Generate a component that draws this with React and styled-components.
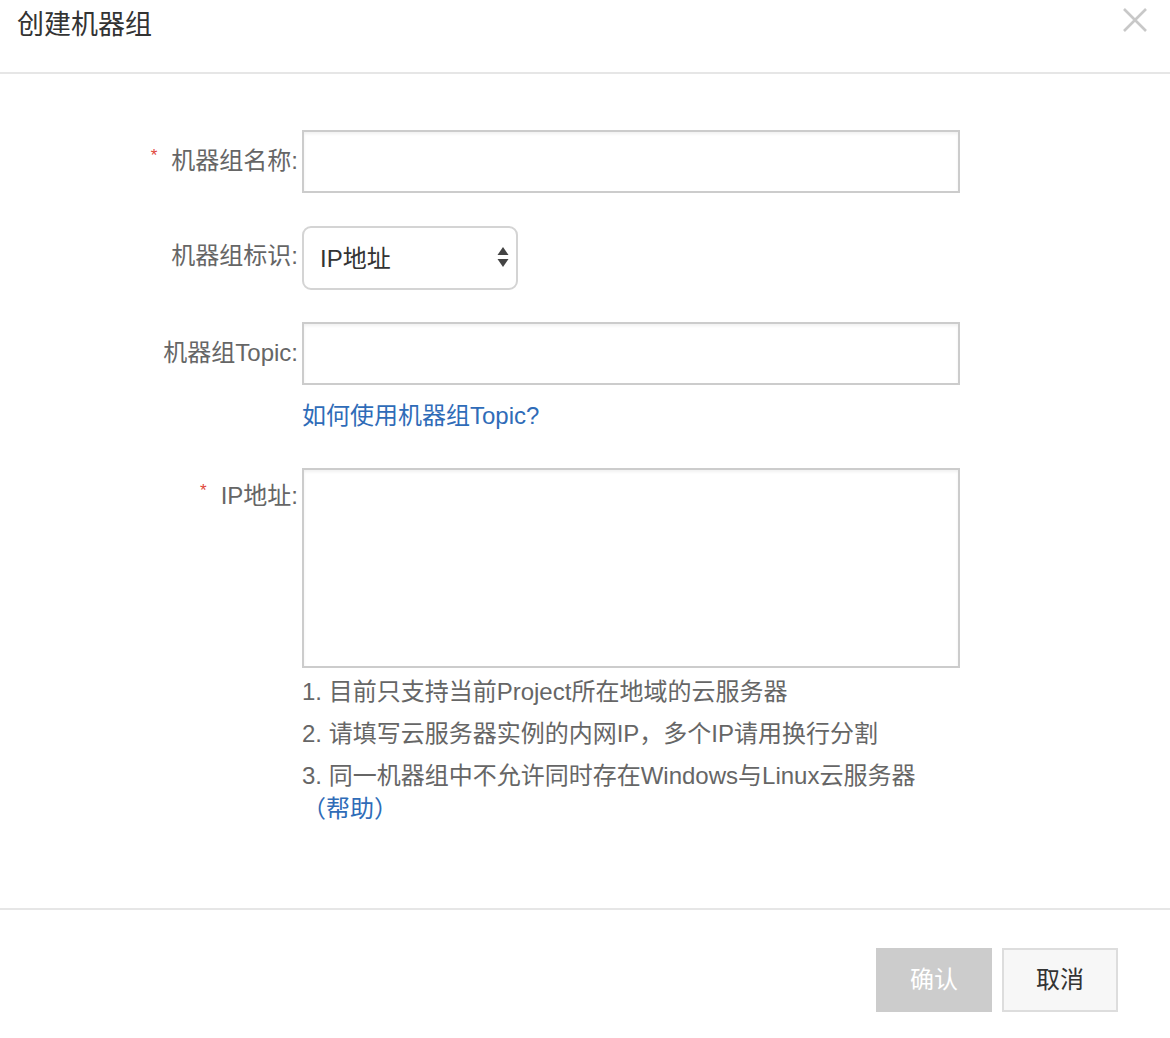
import styled, { createGlobalStyle } from "styled-components";

const GlobalStyle = createGlobalStyle`
  body {
    margin: 0;
    background: #fff;
    font-family: "Liberation Sans", "Noto Sans CJK SC", sans-serif;
  }
`;

const Dialog = styled.div`
  width: 1170px;
  height: 1038px;
  display: flex;
  flex-direction: column;
  background: #fff;
`;

const Header = styled.div`
  position: relative;
  height: 72px;
  padding: 0 17px;
  border-bottom: 2px solid #e6e6e6;
`;

const Title = styled.h2`
  margin: 0;
  padding-top: 3px;
  font-size: 27px;
  font-weight: normal;
  line-height: 44px;
  color: #333;
`;

const Close = styled.button`
  position: absolute;
  top: 7px;
  right: 22px;
  width: 26px;
  height: 26px;
  padding: 0;
  border: none;
  background: none;
  cursor: pointer;
`;

const Body = styled.div`
  padding: 56px 0 0;
  flex: 1;
`;

const Form = styled.div`
  display: grid;
  grid-template-columns: 298px 658px;
  column-gap: 4px;
  row-gap: 32px;
  align-items: start;
`;

const Label = styled.label`
  box-sizing: border-box;
  display: flex;
  justify-content: flex-end;
  align-items: center;
  height: 63px;
  margin-top: ${(p) => (p.$tall ? "2px" : "0")};
  padding-bottom: 7px;
  font-size: 24px;
  color: #666;
  white-space: nowrap;
`;

const Star = styled.span`
  color: #e0463a;
  font-size: 17px;
  margin-right: 14px;
  align-self: center;
  transform: translateY(-2px);
`;

const Field = styled.div`
  display: flex;
  flex-direction: column;
`;

const TextInput = styled.input`
  box-sizing: border-box;
  width: 658px;
  height: 63px;
  border: 2px solid #ccc;
  box-shadow: inset 0 2px 3px rgba(0, 0, 0, 0.06);
  padding: 0 16px;
  font-size: 24px;
  font-family: inherit;
  color: #333;
  outline: none;
`;

const TextArea = styled.textarea`
  box-sizing: border-box;
  width: 658px;
  height: 200px;
  margin-top: 5px;
  border: 2px solid #ccc;
  box-shadow: inset 0 2px 3px rgba(0, 0, 0, 0.06);
  padding: 12px 16px;
  font-size: 24px;
  font-family: inherit;
  color: #333;
  resize: none;
  outline: none;
`;

const SelectWrap = styled.div`
  position: relative;
  width: 216px;
  height: 64px;
  margin-top: 1px;
`;

const Select = styled.select`
  box-sizing: border-box;
  width: 100%;
  height: 100%;
  appearance: none;
  border: 2px solid #d4d4d4;
  border-radius: 9px;
  background: #fff;
  padding: 0 16px;
  font-size: 24px;
  font-family: inherit;
  color: #333;
  outline: none;
`;

const Arrows = styled.svg`
  position: absolute;
  right: 9px;
  top: 21px;
  pointer-events: none;
`;

const HelpLink = styled.a`
  margin-top: 16px;
  font-size: 24px;
  line-height: 30px;
  color: #2f6cb8;
  text-decoration: none;
`;

const Hints = styled.ol`
  margin: 7px 0 0;
  padding: 0;
  list-style: none;
  width: 620px;
`;

const Hint = styled.li`
  font-size: 24px;
  line-height: 33px;
  color: #666;
  margin-bottom: 9px;
`;

const Help = styled.a`
  color: #2f6cb8;
  text-decoration: none;
`;

const Footer = styled.div`
  display: flex;
  justify-content: flex-end;
  gap: 10px;
  padding: 38px 52px 26px;
  border-top: 2px solid #e6e6e6;
`;

const Button = styled.button`
  box-sizing: border-box;
  width: 116px;
  height: 64px;
  padding: 0 0 5px;
  font-size: 24px;
  font-family: inherit;
  border: 2px solid ${(p) => (p.$primary ? "#cccccc" : "#dddddd")};
  background: ${(p) => (p.$primary ? "#cccccc" : "#f7f7f7")};
  color: ${(p) => (p.$primary ? "#fff" : "#333")};
  cursor: ${(p) => (p.$primary ? "not-allowed" : "pointer")};
`;

export default function App() {
  return (
    <>
      <GlobalStyle />
      <Dialog>
        <Header>
          <Title>创建机器组</Title>
          <Close aria-label="关闭">
            <svg width="26" height="26" viewBox="0 0 26 26">
              <path d="M2 2L24 24M24 2L2 24" stroke="#c8c8c8" strokeWidth="2.6" />
            </svg>
          </Close>
        </Header>
        <Body>
          <Form>
            <Label>
              <Star>*</Star>机器组名称:
            </Label>
            <TextInput />

            <Label>机器组标识:</Label>
            <SelectWrap>
              <Select defaultValue="ip">
                <option value="ip">IP地址</option>
                <option value="id">用户自定义标识</option>
              </Select>
              <Arrows width="12" height="20" viewBox="0 0 12 20">
                <path d="M6 0L11.5 8H0.5Z M0.5 12H11.5L6 20Z" fill="#444" />
              </Arrows>
            </SelectWrap>

            <Label>机器组Topic:</Label>
            <Field>
              <TextInput />
              <HelpLink href="#">如何使用机器组Topic?</HelpLink>
            </Field>

            <Label $tall>
              <Star>*</Star>IP地址:
            </Label>
            <Field>
              <TextArea />
              <Hints>
                <Hint>1. 目前只支持当前Project所在地域的云服务器</Hint>
                <Hint>2. 请填写云服务器实例的内网IP，多个IP请用换行分割</Hint>
                <Hint>
                  3. 同一机器组中不允许同时存在Windows与Linux云服务器
                  <Help href="#">（帮助）</Help>
                </Hint>
              </Hints>
            </Field>
          </Form>
        </Body>
        <Footer>
          <Button $primary disabled>
            确认
          </Button>
          <Button>取消</Button>
        </Footer>
      </Dialog>
    </>
  );
}
